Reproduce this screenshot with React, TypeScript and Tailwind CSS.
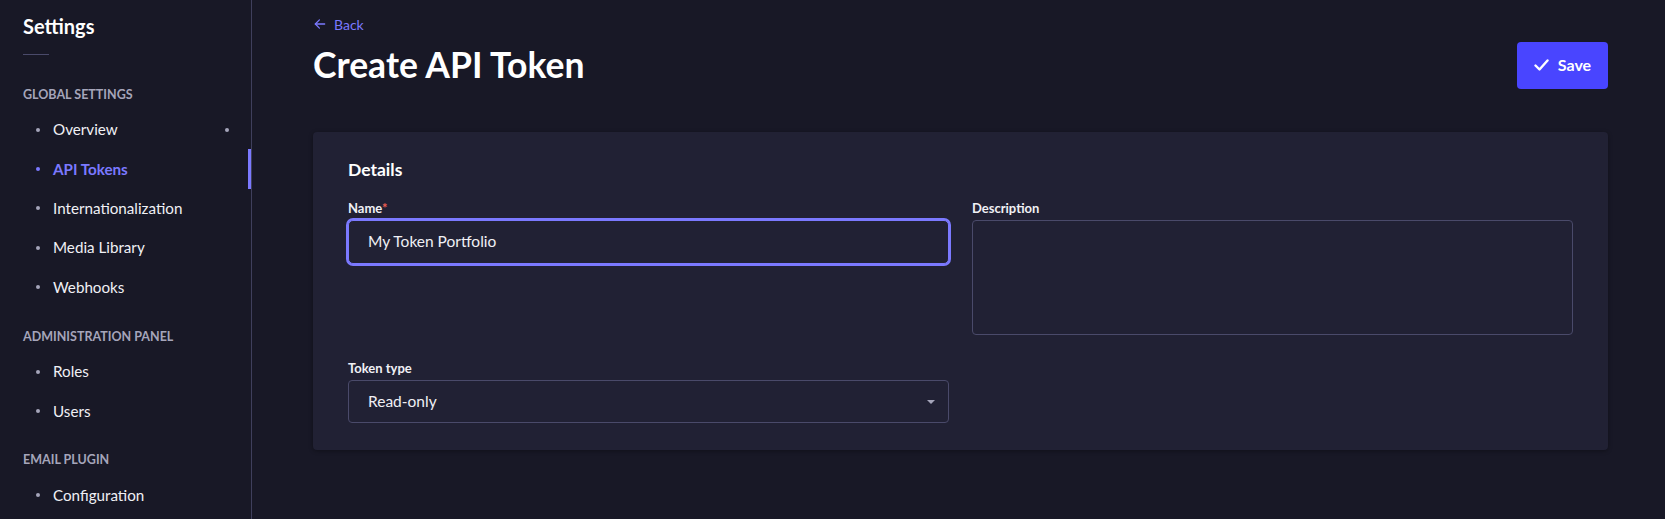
import React from "react";

const font = { fontFamily: "Lato, 'Noto Sans', sans-serif" };

function NavItem({ label, active, dot }: { label: string; active?: boolean; dot?: boolean }) {
  return (
    <div className="relative flex h-[39.4px] items-center pl-[36px] pr-[22px]">
      <span className={`h-[4px] w-[4px] rounded-full ${active ? "bg-[#7b79ff]" : "bg-[#a5a5ba]"}`} />
      <span
        className={`ml-[13px] flex-1 text-[15.2px] ${active ? "font-bold text-[#7b79ff]" : "text-[#f0f0f5]"}`}
      >
        {label}
      </span>
      {dot && <span className="h-[4px] w-[4px] rounded-full bg-[#a5a5ba]" />}
      {active && <span className="absolute right-0 top-0 h-full w-[3px] bg-[#7b79ff]" />}
    </div>
  );
}

function SectionTitle({ children }: { children: React.ReactNode }) {
  return (
    <div className="flex h-[16px] items-center pl-[23px] text-[12.5px] font-bold uppercase text-[#a5a5ba]">
      {children}
    </div>
  );
}

export default function App() {
  return (
    <div className="flex h-[519px] w-full overflow-hidden bg-[#181826] text-white" style={font}>
      <aside className="w-[252px] shrink-0 border-r border-[#3f3f5c]">
        <div className="pl-[23px] pt-[12px] text-[20px] font-bold leading-[28px] text-white">Settings</div>
        <div className="ml-[23px] mt-[14px] h-px w-[26px] bg-[#4a4a6a]" />
        <div className="mt-[32px]">
          <SectionTitle>Global Settings</SectionTitle>
          <div className="mt-[7px]">
            <NavItem label="Overview" dot />
            <NavItem label="API Tokens" active />
            <NavItem label="Internationalization" />
            <NavItem label="Media Library" />
            <NavItem label="Webhooks" />
          </div>
        </div>
        <div className="mt-[22px]">
          <SectionTitle>Administration Panel</SectionTitle>
          <div className="mt-[7px]">
            <NavItem label="Roles" />
            <NavItem label="Users" />
          </div>
        </div>
        <div className="mt-[22px]">
          <SectionTitle>Email Plugin</SectionTitle>
          <div className="mt-[7px]">
            <NavItem label="Configuration" />
          </div>
        </div>
      </aside>

      <main className="flex-1 pl-[61px] pr-[57px]">
        <div className="mt-[14px] flex h-[20px] items-center text-[#7b79ff]">
          <svg width="14" height="14" viewBox="0 0 24 24" fill="none" stroke="currentColor" strokeWidth="2.2" strokeLinecap="round" strokeLinejoin="round">
            <path d="M20 12H4" />
            <path d="M11 19l-7-7 7-7" />
          </svg>
          <span className="ml-[7px] text-[14px]">Back</span>
        </div>
        <div className="mt-[7px] flex h-[48px] items-center justify-between">
          <h1 className="text-[35.5px] font-bold leading-[46px] text-white">Create API Token</h1>
          <button className="flex h-[47px] w-[91px] items-center justify-center rounded-[4px] bg-[#4945ff] text-white">
            <svg width="15" height="12" viewBox="0 0 15 12" fill="none" stroke="currentColor" strokeWidth="2.4" strokeLinecap="round" strokeLinejoin="round">
              <path d="M1.5 6.5l4 4 8-9" />
            </svg>
            <span className="ml-[9px] text-[16px] font-bold">Save</span>
          </button>
        </div>

        <section className="mt-[43px] rounded-[4px] bg-[#212134] px-[35px] pb-[27px] pt-[26px] shadow-[0_1px_4px_rgba(0,0,0,0.35)]">
          <h2 className="text-[17.5px] font-bold leading-[24px] text-white">Details</h2>
          <div className="mt-[18px] grid grid-cols-2 gap-x-[23px] gap-y-[25px]">
            <div>
              <label className="block text-[13px] font-bold leading-[16px] text-[#f0f0f5]">
                Name<span className="text-[#ee5e52]">*</span>
              </label>
              <div className="mt-[4px] flex h-[44px] items-center rounded-[5px] border border-[#7b79ff] bg-[#212134] pl-[19px] text-[15.5px] text-[#f0f0f5] ring-2 ring-[#7b79ff]">
                My Token Portfolio
              </div>
            </div>
            <div>
              <label className="block text-[13px] font-bold leading-[16px] text-[#f0f0f5]">Description</label>
              <div className="mt-[4px] h-[115px] rounded-[4px] border border-[#4a4a6a] bg-[#212134]" />
            </div>
            <div>
              <label className="block text-[13px] font-bold leading-[16px] text-[#f0f0f5]">Token type</label>
              <div className="mt-[4px] flex h-[43px] items-center justify-between rounded-[4px] border border-[#4a4a6a] bg-[#212134] pl-[19px] pr-[13px] text-[15.5px] text-[#f0f0f5]">
                <span>Read-only</span>
                <svg width="8" height="4" viewBox="0 0 8 4">
                  <path d="M0 0h8L4 4z" fill="#a5a5ba" />
                </svg>
              </div>
            </div>
          </div>
        </section>
      </main>
    </div>
  );
}
